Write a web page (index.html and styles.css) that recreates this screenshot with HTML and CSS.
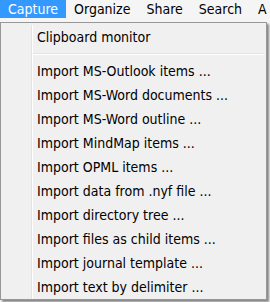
FILE: index.html
```html
<!DOCTYPE html>
<html>
<head>
<meta charset="utf-8">
<link rel="stylesheet" href="styles.css">
</head>
<body>
<div class="menubar">
  <span class="mb-item active">Capture</span>
  <span class="mb-item">Organize</span>
  <span class="mb-item">Share</span>
  <span class="mb-item">Search</span>
  <span class="mb-item">A</span>
</div>
<div class="dropdown">
  <div class="gutter"></div>
  <div class="items">
    <div class="item">Clipboard monitor</div>
    <div class="sep"></div>
    <div class="item">Import MS-Outlook items ...</div>
    <div class="item">Import MS-Word documents ...</div>
    <div class="item">Import MS-Word outline ...</div>
    <div class="item">Import MindMap items ...</div>
    <div class="item">Import OPML items ...</div>
    <div class="item">Import data from .nyf file ...</div>
    <div class="item">Import directory tree ...</div>
    <div class="item">Import files as child items ...</div>
    <div class="item">Import journal template ...</div>
    <div class="item">Import text by delimiter ...</div>
  </div>
</div>
</body>
</html>
```
FILE: styles.css
```css
html, body {
  margin: 0;
  padding: 0;
}
body {
  width: 270px;
  height: 302px;
  overflow: hidden;
  background: #f5f5f5;
  font-family: "DejaVu Sans Condensed", "DejaVu Sans", sans-serif;
  font-stretch: condensed;
  font-size: 14px;
  color: #000;
}
.menubar {
  display: flex;
  height: 22px;
  align-items: flex-start;
  white-space: nowrap;
}
.mb-item {
  height: 18px;
  line-height: 18px;
  padding: 0 8px;
}
.mb-item.active {
  background: #3399ff;
  color: #fff;
}
.dropdown {
  display: flex;
  width: 265px;
  height: 275px;
  background: #f0f0f0;
  border: 1px solid #979797;
  box-shadow: 2px 2px 2px rgba(0, 0, 0, 0.45);
  padding-top: 1px;
}
.gutter {
  width: 30px;
  border-right: 1px solid #e2e3e3;
  box-shadow: 1px 0 0 #fff;
  margin-top: 1px;
}
.items {
  flex: 1;
  padding-left: 5px;
  padding-top: 1px;
}
.item {
  height: 24px;
  line-height: 24px;
  white-space: nowrap;
}
.sep {
  height: 1px;
  margin: 4px 2px 4px -4px;
  background: #e2e3e3;
  border-bottom: 1px solid #fff;
}
```
